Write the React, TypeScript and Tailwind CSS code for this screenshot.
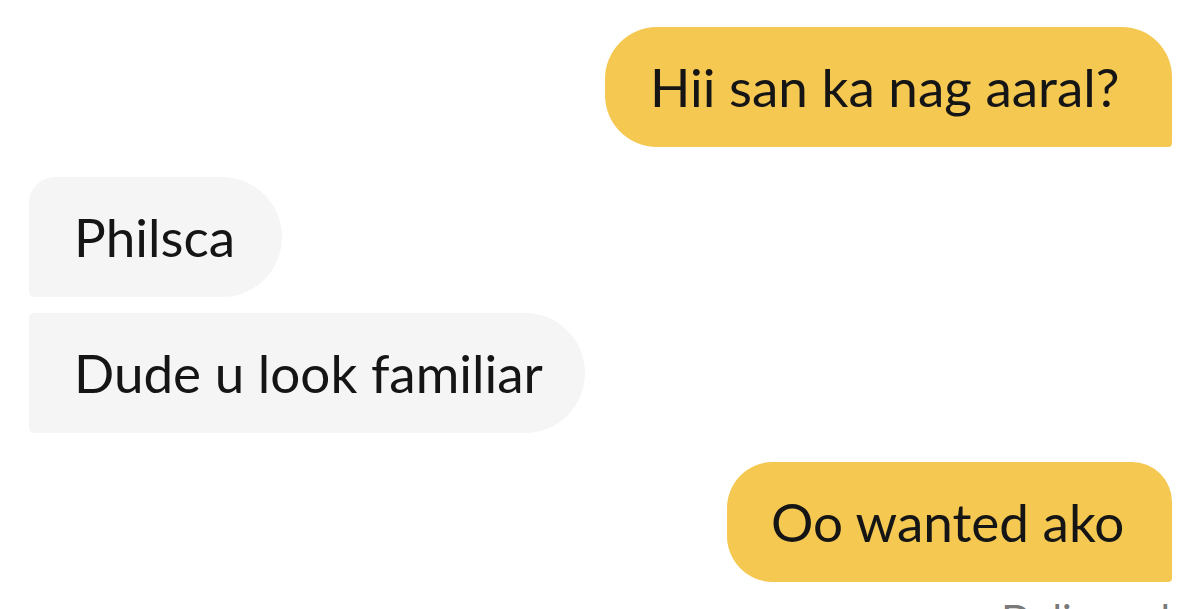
const font = { fontFamily: "Lato, 'Noto Sans', sans-serif" };

const App = () => {
  return (
    <div className="w-[1200px] h-[609px] overflow-hidden bg-white" style={font}>
      <div className="flex flex-col pl-[29px] pr-[28px] pt-[27px]">
        <div className="self-end w-[567px] h-[120px] flex items-center pl-[45px] bg-[#f5c851] rounded-tl-[52px] rounded-bl-[52px] rounded-tr-[50px] rounded-br-[4px]">
          <span className="text-[53px] text-[#151515] whitespace-nowrap">Hii san ka nag aaral?</span>
        </div>

        <div className="self-start w-[253px] mt-[30px] h-[120px] flex items-center pl-[45px] bg-[#f5f5f5] rounded-tl-[26px] rounded-bl-[5px] rounded-r-[60px]">
          <span className="text-[53px] text-[#151515] whitespace-nowrap">Philsca</span>
        </div>

        <div className="self-start w-[556px] mt-[16px] h-[120px] flex items-center pl-[45px] bg-[#f5f5f5] rounded-l-[5px] rounded-r-[60px]">
          <span className="text-[53px] text-[#151515] whitespace-nowrap">Dude u look familiar</span>
        </div>

        <div className="self-end w-[445px] mt-[29px] h-[120px] flex items-center pl-[44px] bg-[#f5c851] rounded-tl-[46px] rounded-bl-[46px] rounded-tr-[40px] rounded-br-[4px]">
          <span className="text-[53px] text-[#151515] whitespace-nowrap">Oo wanted ako</span>
        </div>

        <div className="self-end mt-[17px] pr-[2px] text-[40px] leading-none text-[#7a7a7a]">Delivered</div>
      </div>
    </div>
  );
};

export default App;
